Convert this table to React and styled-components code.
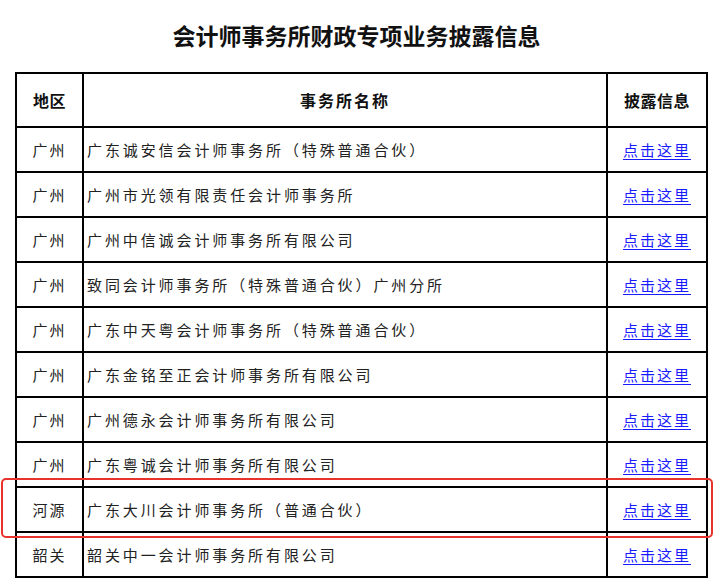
import React from 'react';
import styled, {createGlobalStyle} from 'styled-components';

const rows = [
	{area: '广州', name: '广东诚安信会计师事务所（特殊普通合伙）'},
	{area: '广州', name: '广州市光领有限责任会计师事务所'},
	{area: '广州', name: '广州中信诚会计师事务所有限公司'},
	{area: '广州', name: '致同会计师事务所（特殊普通合伙）广州分所'},
	{area: '广州', name: '广东中天粤会计师事务所（特殊普通合伙）'},
	{area: '广州', name: '广东金铭至正会计师事务所有限公司'},
	{area: '广州', name: '广州德永会计师事务所有限公司'},
	{area: '广州', name: '广东粤诚会计师事务所有限公司'},
	{area: '河源', name: '广东大川会计师事务所（普通合伙）', marked: true},
	{area: '韶关', name: '韶关中一会计师事务所有限公司'}
];

const GlobalStyle = createGlobalStyle`
	html, body {
		margin: 0;
		padding: 0;
		background: #ffffff;
	}
	body {
		font-family: "Noto Sans CJK SC", "Noto Sans", sans-serif;
		color: #222;
		overflow: hidden;
	}
`;

const Page = styled.div`
	width: 713px;
	height: 588px;
	overflow: hidden;
`;

const Title = styled.h1`
	margin: 0;
	height: 72px;
	padding-top: 21px;
	box-sizing: border-box;
	text-align: center;
	font-size: 23px;
	line-height: 28px;
	font-weight: 700;
	color: #111;
`;

const TableWrap = styled.div`
	margin: 0 7px 0 15px;
`;

const Table = styled.table`
	width: 691px;
	border-collapse: collapse;
	table-layout: fixed;
`;

const HeadCell = styled.th`
	height: 52px;
	padding: 0;
	border: 2px solid #000;
	font-size: 16px;
	font-weight: 700;
	letter-spacing: ${({spaced}) => (spaced ? '2px' : '0.5px')};
	color: #111;
	text-align: center;
`;

const Cell = styled.td`
	position: relative;
	height: 43px;
	padding: 0 ${({align}) => (align === 'left' ? '3px' : '0')};
	border: 2px solid #000;
	font-size: 15px;
	letter-spacing: ${({align}) => (align === 'left' ? '2.9px' : '2px')};
	text-align: ${({align}) => align || 'center'};
	white-space: nowrap;
`;

const Link = styled.a`
	color: #1a1aff;
	text-decoration: underline;
	text-underline-offset: 3px;
	cursor: pointer;
`;

// red marker drawn over the whole row
const Highlight = styled.div`
	position: absolute;
	left: -16px;
	width: 708px;
	top: -10px;
	bottom: -7px;
	border: 2px solid #e8322c;
	border-radius: 5px;
	pointer-events: none;
`;

const Note = styled.p`
	margin: 6px 0 0 17px;
	font-size: 15px;
	letter-spacing: 2px;
	color: #222;
`;

const App = function() {
	return (
		<Page>
			<GlobalStyle />
			<Title>会计师事务所财政专项业务披露信息</Title>
			<TableWrap>
				<Table>
					<colgroup>
						<col style={{width: 67}} />
						<col style={{width: 524}} />
						<col style={{width: 100}} />
					</colgroup>
					<thead>
						<tr>
							<HeadCell>地区</HeadCell>
							<HeadCell spaced>事务所名称</HeadCell>
							<HeadCell>披露信息</HeadCell>
						</tr>
					</thead>
					<tbody>
						{rows.map((row) => (
							<tr key={row.name}>
								<Cell>
									{row.marked && <Highlight />}
									{row.area}
								</Cell>
								<Cell align="left">{row.name}</Cell>
								<Cell>
									<Link>点击这里</Link>
								</Cell>
							</tr>
						))}
					</tbody>
				</Table>
			</TableWrap>
			<Note>※以上披露数据信息来源于会计师事务所自行填报数据。</Note>
		</Page>
	);
};

export default App;
